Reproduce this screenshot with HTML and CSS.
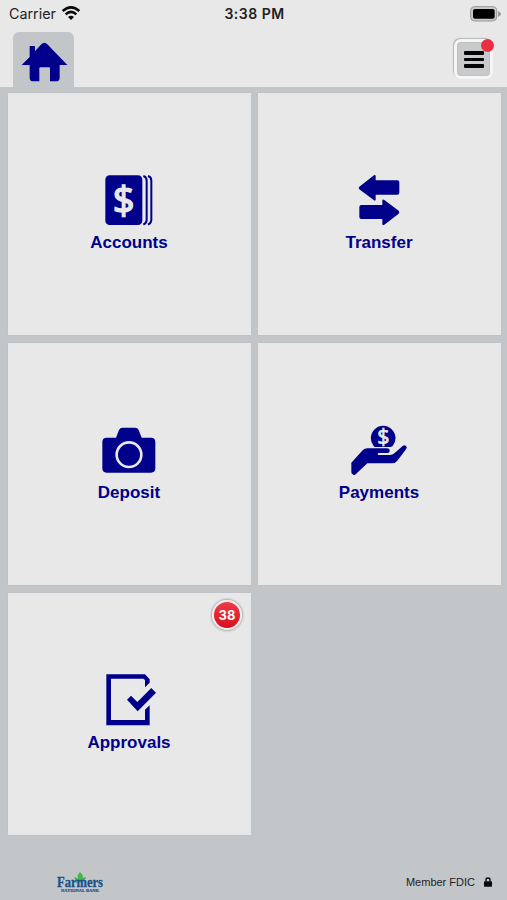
FILE: index.html
```html
<!DOCTYPE html>
<html lang="en">
<head>
<meta charset="utf-8">
<title>Farmers National Bank</title>
<link rel="stylesheet" href="styles.css">
</head>
<body>
<div class="status">
  <div class="carrier"><span>Carrier</span>
    <svg width="18" height="14" viewBox="0 0 54 42" fill="none" stroke="#080808" stroke-width="7.5"><path d="M2 15Q27-7 52 15M11 25Q27 10 43 25"/><path d="M18 33Q27 25 36 33L27 42Z" fill="#080808" stroke="none"/></svg>
  </div>
  <div class="time">3:38 PM</div>
  <svg class="battery" width="31" height="16" viewBox="0 0 93 48"><rect x="2" y="2" width="78" height="43" rx="12" fill="#c9cac9" stroke="#969797" stroke-width="3"/><rect x="9" y="9" width="65" height="29" rx="6" fill="#000"/><path d="M84 15Q93 19 93 24T84 33Z" fill="#989999"/></svg>
</div>
<header class="bar">
  <div class="home">
    <svg width="47" height="41" viewBox="61 126 141 123" fill="#00008b"><path d="M63 195L87 171V140Q87 138 89 138H101Q103 138 103 140V154L122 133Q131 124 140 133L200 195H177V233Q177 244 166 244H148V205Q148 202 145 202H119Q116 202 116 205V244H98Q87 244 87 233V195Z"/></svg>
  </div>
  <div class="menu"><span class="line"></span><span class="line"></span><span class="line"></span><span class="dot"></span></div>
</header>
<main class="grid">
  <div class="tile">
    <svg class="icon" viewBox="57 21 183 168"><rect x="76" y="31" width="111" height="149" rx="13" fill="#00008b"/><path d="M190 33Q200 36 200 47V164Q200 174 190 179M204 33Q214 36 214 47V164Q214 174 204 179" fill="none" stroke="#00008b" stroke-width="6"/><text x="131" y="147" class="dollar">$</text></svg>
    <div class="label">Accounts</div>
  </div>
  <div class="tile">
    <svg class="icon navy" viewBox="57 21 183 168"><path d="M88 65L132 31Q137 28 137 34V46H202Q208 46 208 52V83Q208 89 202 89H137V103Q137 110 132 106L88 73Q84 69 88 65Z"/><path d="M206 137L163 105Q157 101 157 108V120H94Q88 120 88 126V156Q88 162 94 162H157V176Q157 183 163 179L206 146Q210 141 206 137Z"/></svg>
    <div class="label">Transfer</div>
  </div>
  <div class="tile">
    <svg class="icon navy" viewBox="57 21 183 168"><path d="M80 68H108L117 45Q120 38 128 38H165Q173 38 176 45L185 68H213Q226 68 226 81V160Q226 173 213 173H80Q67 173 67 160V81Q67 68 80 68Z"/><circle cx="147" cy="119" r="37" fill="none" stroke="#e8e8e8" stroke-width="8"/></svg>
    <div class="label">Deposit</div>
  </div>
  <div class="tile">
    <svg class="icon navy" viewBox="57 21 183 168"><path d="M131 93A37 37 0 1 1 188 93Q184 97 176 96H134Z"/><text x="160" y="87" class="dollar small">$</text><path d="M64 143L98 106Q104 100 112 100H170Q179 100 179 107T170 114H147Q143 114 143 117T147 120H180Q188 120 193 115L218 93Q223 89 228 93Q233 97 228 103L202 137Q196 145 186 145H112L77 178Q74 181 70 179L66 176Q64 174 64 170Z"/></svg>
    <div class="label">Payments</div>
  </div>
  <div class="tile">
    <svg class="icon navy" viewBox="57 21 183 168"><path d="M79 28H195L209 43V53L195 67V45L190 41H93V165H195V134L209 121V181H79Z"/><path d="M141 104L153 92L172 111L214 69L228 83L173 139Z"/></svg>
    <div class="label">Approvals</div>
    <div class="badge">38</div>
  </div>
</main>
<footer class="foot">
  <div class="logo">
    <svg width="50" height="24" viewBox="0 0 50 24"><path d="M24 1Q19 6 24 12Q30 6 24 1Z" fill="#43b649"/><path d="M18 6Q20 11 24 11Q29 10 30 6Q25 7 24 11Q22 7 18 6Z" fill="#43a047"/><text x="1" y="15.5" textLength="46" lengthAdjust="spacingAndGlyphs" class="brand">Farmers</text><text x="5" y="21" textLength="38" lengthAdjust="spacingAndGlyphs" class="sub">NATIONAL BANK</text></svg>
  </div>
  <div class="fdic"><span>Member FDIC</span>
    <svg width="8" height="10" viewBox="0 0 24 30"><path d="M6 14V8Q6 3 12 3T18 8V14" fill="none" stroke="#0b0b0b" stroke-width="4"/><rect y="13" width="24" height="16" rx="2" fill="#0b0b0b"/></svg>
  </div>
</footer>
</body>
</html>
```

FILE: styles.css
```css
* { box-sizing: border-box; }
body {
  margin: 0;
  width: 507px;
  height: 900px;
  background: #c2c6c9;
  font-family: "Liberation Sans", Arial, sans-serif;
  display: flex;
  flex-direction: column;
  overflow: hidden;
}
.status {
  height: 28px;
  background: #e8e8e8;
  display: grid;
  grid-template-columns: 1fr auto 1fr;
  align-items: center;
  padding: 0 6px 0 8px;
  font: 14.3px/28px Inter, sans-serif;
  color: #222;
}
.carrier { display: flex; align-items: center; gap: 6px; padding-left: 1px; }
.carrier svg { margin-top: -2px; }
.time { font-weight: 600; font-size: 14px; letter-spacing: 0.5px; }
.battery { justify-self: end; margin-top: -1px; }
.bar {
  height: 59px;
  background: #e8e8e8;
  display: flex;
  justify-content: space-between;
  padding: 4px 14px 0 13px;
}
.home {
  width: 61px;
  height: 55px;
  border-radius: 6px 6px 0 0;
  background: #c2c6c9;
  padding: 10px 0 0 8px;
}
.menu {
  position: relative;
  width: 39px;
  height: 40px;
  margin-top: 7px;
  border: 3px solid #f5f5f5;
  border-radius: 7px;
  background: #c8cacb;
  box-shadow: -1px -1px 1px #b5b7b8, inset 0 0 2px #aaa;
  display: flex;
  flex-direction: column;
  align-items: center;
  justify-content: center;
  gap: 3px;
  padding-top: 1px;
}
.line { width: 20px; height: 3.5px; border-radius: 1px; background: #050505; }
.dot {
  position: absolute;
  right: -4px;
  top: -3px;
  width: 13px;
  height: 13px;
  border-radius: 50%;
  background: #ea2f42;
}
.grid {
  display: grid;
  grid-template-columns: 243px 243px;
  grid-auto-rows: 242px;
  gap: 8px 7px;
  padding: 6px 8px 0;
  flex: 1;
}
.tile {
  position: relative;
  background: #e8e8e8;
  box-shadow: 0 0 1px #b0b4b7;
  display: flex;
  flex-direction: column;
  align-items: center;
  padding: 79px 1px 0 0;
}
.icon { width: 61px; height: 56px; }
.navy { fill: #00008b; }
.label {
  margin-top: 5px;
  font-size: 17px;
  line-height: 20px;
  font-weight: 700;
  color: #00008b;
}
.dollar {
  font: 400 114px "Noto Sans", sans-serif;
  text-anchor: middle;
  fill: #e8e8e8;
  stroke: #e8e8e8;
  stroke-width: 4px;
}
.dollar.small { font-size: 64px; stroke-width: 2px; }
.badge {
  position: absolute;
  top: 7px;
  right: 9px;
  width: 30px;
  height: 30px;
  border: 2px solid #f6eeee;
  border-radius: 50%;
  background: linear-gradient(#ee3c48, #d90d20);
  box-shadow: 0 0 2px 1px #aaa;
  color: #fff;
  font: 700 13px/26px Inter, sans-serif;
  text-align: center;
}
.foot {
  height: 36px;
  display: flex;
  justify-content: space-between;
  padding: 7px 15px 0 56px;
}
.logo svg { overflow: visible; }
.brand { font: 700 14px "Liberation Serif", serif; fill: #17518c; stroke: #17518c; stroke-width: 0.3px; }
.sub { font: 700 5px "Liberation Serif", serif; fill: #17518c; stroke: #17518c; stroke-width: 0.2px; }
.fdic {
  display: flex;
  align-items: center;
  gap: 9px;
  height: 22px;
  font-size: 11px;
  color: #222;
}
```
